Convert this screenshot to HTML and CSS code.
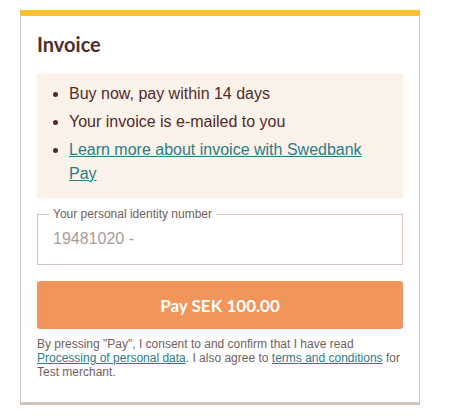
FILE: index.html
```html
<!DOCTYPE html>
<html lang="en">
<head>
<meta charset="utf-8">
<title>Invoice</title>
<link rel="stylesheet" href="styles.css">
</head>
<body>
<div class="card">
  <h1 class="title">Invoice</h1>
  <div class="info">
    <ul class="info-list">
      <li>Buy now, pay within 14 days</li>
      <li>Your invoice is e-mailed to you</li>
      <li><a class="link" href="#">Learn more about invoice with Swedbank Pay</a></li>
    </ul>
  </div>
  <fieldset class="field">
    <legend class="field-label">Your personal identity number</legend>
    <input class="field-input" type="text" placeholder="19481020 -">
  </fieldset>
  <button class="pay-btn" type="button">Pay SEK 100.00</button>
  <p class="terms">By pressing "Pay", I consent to and confirm that I have read <a class="link" href="#">Processing of personal data</a>. I also agree to <a class="link" href="#">terms and conditions</a> for Test merchant.</p>
</div>
</body>
</html>
```

FILE: styles.css
```css
* { box-sizing: border-box; }
html, body { background: #fff; }
body {
  margin: 0;
  padding: 10px 0 0 20px;
  font-family: "Liberation Sans", Arial, sans-serif;
  color: #512b2b;
}
.card {
  width: 400px;
  border: 1px solid #d3c3b8;
  border-top: 6px solid #fdc129;
  border-bottom: 3px solid #d3c3b8;
  padding: 16px 16px 16px 16px;
  background: #fff;
}
.title {
  margin: 0 0 18px 0;
  font-family: Lato, "Open Sans", sans-serif;
  font-weight: 700;
  font-size: 20px;
  line-height: 24px;
  color: #512b2b;
}
.info {
  background: #fbf2ea;
  padding: 8px 16px 8px 0;
}
.info-list {
  margin: 0;
  padding-left: 32px;
  font-size: 16px;
  line-height: 24px;
  color: #512b2b;
}
.info-list li { margin-bottom: 4px; }
.link {
  color: #2a7d88;
  text-decoration: underline;
}
.field {
  margin: 9px 0 0 0;
  padding: 0 0 7px 11px;
  border: 1px solid #d3c3b8;
  min-width: 0;
}
.field-label {
  padding: 0 4px;
  font-size: 12px;
  line-height: 14px;
  color: #72605e;
}
.field-input {
  display: block;
  width: 100%;
  height: 36px;
  margin: 0;
  padding: 0 4px;
  border: 0;
  outline: none;
  background: transparent;
  font-family: "Liberation Sans", Arial, sans-serif;
  font-size: 16px;
  color: #512b2b;
}
.field-input::placeholder { color: #a89c98; }
.pay-btn {
  display: block;
  width: 100%;
  height: 48px;
  margin-top: 16px;
  border: 0;
  border-radius: 3px;
  background: #f2955a;
  color: #fff;
  font-family: Lato, "Open Sans", sans-serif;
  font-weight: 700;
  font-size: 17px;
  cursor: pointer;
}
.terms {
  margin: 8px 0 7px 0;
  font-size: 12px;
  line-height: 14px;
  color: #72605e;
}
```
